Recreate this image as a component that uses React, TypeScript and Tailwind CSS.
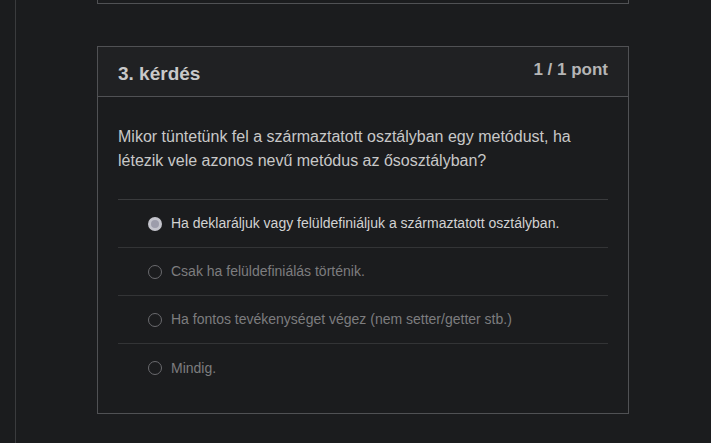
import React from 'react';

const options = [
    { text: 'Ha deklaráljuk vagy felüldefiniáljuk a származtatott osztályban.', checked: true },
    { text: 'Csak ha felüldefiniálás történik.', checked: false },
    { text: 'Ha fontos tevékenységet végez (nem setter/getter stb.)', checked: false },
    { text: 'Mindig.', checked: false },
];

const Radio: React.FC<{ checked: boolean }> = ({ checked }) =>
    checked ? (
        <span className="flex h-[14px] w-[14px] shrink-0 items-center justify-center rounded-full bg-[#c4c4cc]">
            <span className="h-[8px] w-[8px] rounded-full bg-[#9d9dab]" />
        </span>
    ) : (
        <span className="h-[14px] w-[14px] shrink-0 rounded-full border border-[#6a6a6e]" />
    );

export default function App() {
    return (
        <div className="h-[443px] overflow-hidden bg-[#1b1c1e] font-['Liberation_Sans',Arial,sans-serif]">
            <div className="ml-[15px] h-full border-l border-[#3a3b3d] pl-[81px]">
                {/* previous question (bottom edge) */}
                <div className="h-[4px] w-[532px] border border-t-0 border-[#505154]" />

                {/* Question card */}
                <div className="mt-[42px] w-[532px] border border-[#505154]">
                    <div className="flex h-[50px] items-start justify-between border-b border-[#505154] bg-[#202123] px-[20px]">
                        <h2 className="mt-[16px] text-[19px] font-bold leading-[22px] text-[#c9c9c9]">3. kérdés</h2>
                        <span className="mt-[14px] text-[17px] font-bold leading-[18px] text-[#b5b5b5]">1 / 1 pont</span>
                    </div>

                    <div className="px-[20px] pt-[28px] pb-[21px]">
                        <p className="text-[16px] leading-[24px] text-[#c8c8c8]">
                            Mikor tüntetünk fel a származtatott osztályban egy metódust, ha létezik vele azonos nevű metódus az ősosztályban?
                        </p>

                        <ul className="mt-[26px] border-t border-[#3a3b3d]">
                            {options.map((o, i) => (
                                <li
                                    key={i}
                                    className={`flex h-[48px] items-center gap-[9px] pl-[30px] ${i < options.length - 1 ? 'border-b border-[#333436]' : ''}`}
                                >
                                    <Radio checked={o.checked} />
                                    <span className={`text-[14px] ${o.checked ? 'text-[#d2d2d2]' : 'text-[#7d7d7f]'}`}>{o.text}</span>
                                </li>
                            ))}
                        </ul>
                    </div>
                </div>
            </div>
        </div>
    );
}
